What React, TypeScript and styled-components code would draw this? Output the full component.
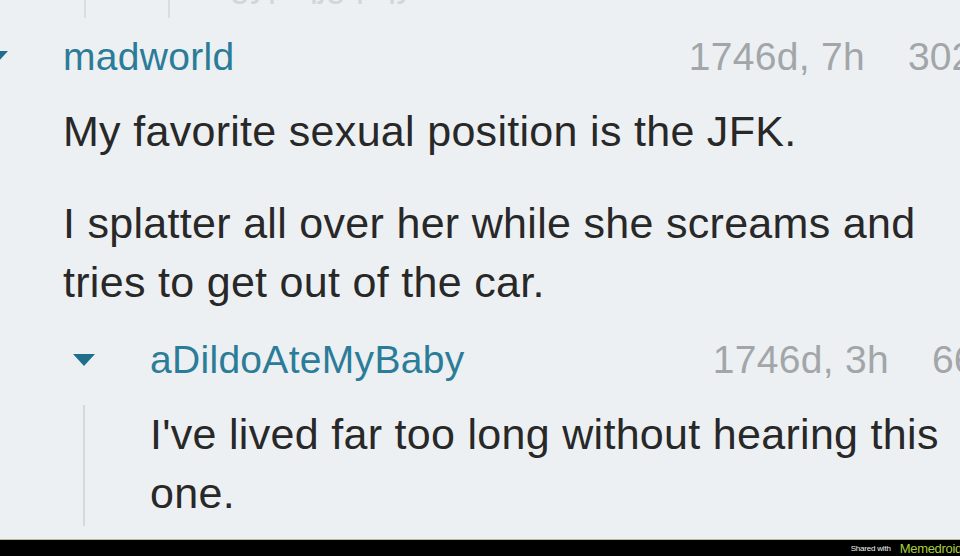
import React from "react";
import styled, { createGlobalStyle } from "styled-components";

const Global = createGlobalStyle`
  html, body { margin: 0; padding: 0; background: #edf0f2; }
  #root { width: 960px; height: 556px; }
`;

const Page = styled.div`
  width: 960px;
  height: 556px;
  overflow: hidden;
  display: flex;
  flex-direction: column;
  background: #edf0f2;
  font-family: "Liberation Sans", Arial, Helvetica, sans-serif;
`;

const Stub = styled.div`
  height: 33px;
  flex-shrink: 0;
  display: flex;
  align-items: flex-start;
  padding-left: 84px;
  gap: 82px;
`;

const StubLine = styled.div`
  width: 2px;
  height: 18px;
  background: #d9dde0;
`;

const StubText = styled.div`
  height: 4px;
  margin-left: -22px;
  overflow: hidden;
  display: flex;
  align-items: flex-end;
  font-size: 36px;
  line-height: 40px;
  color: #d2d6d9;
  white-space: nowrap;
`;

const Header = styled.div<{ $indent: number }>`
  display: flex;
  align-items: center;
  height: 48px;
  flex-shrink: 0;
  padding-left: ${(p) => p.$indent}px;
  font-size: 39px;
  line-height: 48px;
  white-space: nowrap;
`;

const Toggle = styled.svg<{ $gap: number }>`
  width: 22px;
  height: 12px;
  flex-shrink: 0;
  margin-right: ${(p) => p.$gap}px;
`;

const Name = styled.span`
  color: #2b7c98;
  letter-spacing: 0.3px;
`;

const Spacer = styled.div`
  flex: 1;
`;

const Meta = styled.span`
  color: #a2a6a9;
  letter-spacing: 0.3px;
`;

const Score = styled.span<{ $w: number }>`
  color: #a2a6a9;
  width: ${(p) => p.$w}px;
  margin-left: 43px;
  overflow: hidden;
  flex-shrink: 0;
`;

const Body = styled.div<{ $indent: number; $top: number }>`
  padding-left: ${(p) => p.$indent}px;
  margin-top: ${(p) => p.$top}px;
  color: #282828;
  font-size: 43px;
  line-height: 59px;
  letter-spacing: 0.3px;
`;

const Para = styled.p<{ $gap: number }>`
  margin: ${(p) => p.$gap}px 0 0;
`;

const ReplyBody = styled.div`
  margin: 21px 0 0 83px;
  padding-left: 65px;
  border-left: 2px solid #d5d9db;
  color: #282828;
  font-size: 43px;
  line-height: 59px;
  letter-spacing: 0.3px;
  padding-bottom: 3px;
`;

const Footer = styled.div`
  margin-top: auto;
  height: 16px;
  flex-shrink: 0;
  background: #000;
  border-top: 1px solid #b9bb8e;
  display: flex;
  justify-content: flex-end;
  align-items: center;
  gap: 9px;
  white-space: nowrap;
`;

const Shared = styled.span`
  color: #f2f2f2;
  font-size: 8px;
  letter-spacing: -0.2px;
`;

const Brand = styled.span`
  color: #a6cf3a;
  font-size: 13px;
  letter-spacing: -0.3px;
  margin-right: -2px;
`;

const Triangle = ({ gap, shift }: { gap: number; shift?: number }) => (
  <Toggle $gap={gap} viewBox="0 0 22 12" style={shift ? { marginLeft: shift } : undefined}>
    <polygon points="0,0 22,0 11,12" fill="#1f6e8c" />
  </Toggle>
);

export default function App() {
  return (
    <>
      <Global />
      <Page>
        <Stub>
          <StubLine />
          <StubLine />
          <StubText>gyp qjg pqy</StubText>
        </Stub>

        <Header $indent={0}>
          <Triangle gap={55} shift={-14} />
          <Name>madworld</Name>
          <Spacer />
          <Meta>1746d, 7h</Meta>
          <Score $w={52}>302</Score>
        </Header>

        <Body $indent={63} $top={21}>
          <Para $gap={0}>My favorite sexual position is the JFK.</Para>
          <Para $gap={33}>
            I splatter all over her while she screams and tries to get out of the car.
          </Para>
        </Body>

        <Header $indent={73} style={{ marginTop: 24 }}>
          <Triangle gap={55} />
          <Name>aDildoAteMyBaby</Name>
          <Spacer />
          <Meta>1746d, 3h</Meta>
          <Score $w={28}>66</Score>
        </Header>

        <ReplyBody>I've lived far too long without hearing this one.</ReplyBody>

        <Footer>
          <Shared>Shared with</Shared>
          <Brand>Memedroid</Brand>
        </Footer>
      </Page>
    </>
  );
}
